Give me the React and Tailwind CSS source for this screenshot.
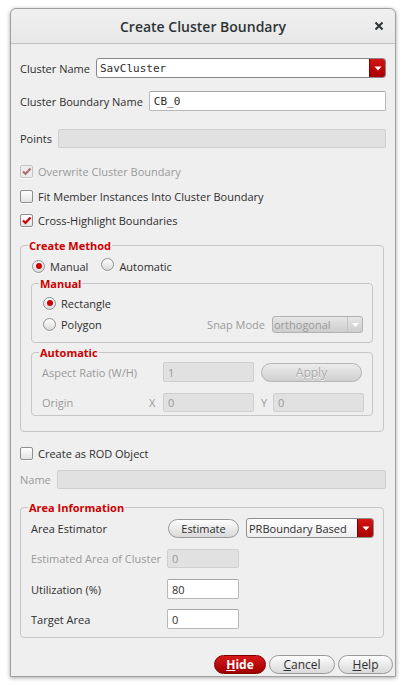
import React from "react";

const F = { fontFamily: '"Open Sans", "DejaVu Sans", sans-serif' };

function Check({ checked, disabled }) {
  return (
    <span
      className={`inline-flex items-center justify-center w-[13px] h-[13px] rounded-[2px] border ${
        disabled ? "border-[#c4c4c4] bg-[#ececec]" : "border-[#8f8f8f] bg-gradient-to-b from-[#ffffff] to-[#e4e4e4]"
      } shadow-[0_1px_0_rgba(255,255,255,0.8)]`}
    >
      {checked && (
        <svg width="11" height="11" viewBox="0 0 11 11">
          <path
            d="M2 5.5 L4.5 8 L9.5 2.5"
            fill="none"
            stroke={disabled ? "#b07070" : "#cc0000"}
            strokeWidth="2.2"
          />
        </svg>
      )}
    </span>
  );
}

function Radio({ checked }) {
  return (
    <span className="inline-flex items-center justify-center w-[13px] h-[13px] rounded-full border border-[#8f8f8f] bg-gradient-to-b from-[#ffffff] to-[#dadada] shadow-[0_1px_0_rgba(255,255,255,0.8)]">
      {checked && <span className="w-[6px] h-[6px] rounded-full bg-[#cc0000]" />}
    </span>
  );
}

function RedArrow({ w = 16 }) {
  return (
    <span
      className="flex items-center justify-center h-full bg-gradient-to-b from-[#d41414] to-[#a80000] border-l border-[#7a0000]"
      style={{ width: w }}
    >
      <svg width="8" height="5" viewBox="0 0 8 5">
        <path d="M0.5 0.5 L7.5 0.5 L4 4.5 Z" fill="#ffffff" />
      </svg>
    </span>
  );
}

function Input({ value, disabled, className = "", mono }) {
  return (
    <div
      className={`flex items-center px-[4px] rounded-[2px] border ${
        disabled
          ? "bg-[#e1e1e1] border-[#cfcfcf] text-[#9a9a9a]"
          : "bg-white border-[#b8b8b8] border-t-[#a6a6a6] text-[#2e2e2e]"
      } ${className}`}
      style={mono ? { fontFamily: '"DejaVu Sans Mono", monospace', fontSize: 11 } : undefined}
    >
      {value}
    </div>
  );
}

function Pill({ children, className = "", disabled }) {
  return (
    <div
      className={`flex items-center justify-center rounded-full border ${
        disabled
          ? "border-[#b4b4b4] bg-gradient-to-b from-[#ececec] to-[#cfcfcf] text-[#a8a8a8] [text-shadow:0_1px_0_#ffffff]"
          : "border-[#9a9a9a] bg-gradient-to-b from-[#fdfdfd] to-[#d9d9d9] text-[#2e2e2e]"
      } ${className}`}
    >
      {children}
    </div>
  );
}

export default function App() {
  return (
    <div className="w-[405px] h-[685px] bg-white pt-[8px] pl-[10px]" style={F}>
      <div className="w-[386px] h-[669px] flex flex-col bg-[#efefef] border border-[#9f9f9f] rounded-t-[6px] shadow-[0_1px_4px_rgba(0,0,0,0.35)] text-[11px] text-[#2e2e2e] leading-[15px]">
        {/* Title bar */}
        <div className="h-[35px] shrink-0 flex items-center justify-center relative border-b border-[#c0c0c0] bg-gradient-to-b from-[#f0f0f0] to-[#e8e8e8] rounded-t-[6px]">
          <span className="text-[14px] font-semibold text-[#2e3436]">Create Cluster Boundary</span>
          <svg className="absolute right-[11px] top-[12px]" width="10" height="10" viewBox="0 0 10 10">
            <path d="M1.5 1.5 L8.5 8.5 M8.5 1.5 L1.5 8.5" stroke="#2e3436" strokeWidth="2" />
          </svg>
        </div>

        <div className="px-[9px] flex flex-col">
          {/* Cluster Name */}
          <div className="mt-[14px] flex items-center gap-[6px]">
            <span>Cluster Name</span>
            <div className="flex-1 h-[20px] flex items-stretch rounded-[3px] border border-[#888888] bg-white overflow-hidden">
              <span
                className="flex-1 flex items-center pl-[3px]"
                style={{ fontFamily: '"DejaVu Sans Mono", monospace', fontSize: 11 }}
              >
                SavCluster
              </span>
              <RedArrow w={16} />
            </div>
          </div>

          {/* Boundary name */}
          <div className="mt-[13px] flex items-center gap-[6px]">
            <span>Cluster Boundary Name</span>
            <Input value="CB_0" mono className="flex-1 h-[20px]" />
          </div>

          {/* Points */}
          <div className="mt-[18px] flex items-center gap-[6px]">
            <span>Points</span>
            <Input value="" disabled className="flex-1 h-[19px]" />
          </div>

          {/* Checkboxes */}
          <div className="mt-[15px] h-[16px] flex items-center gap-[5px] text-[#9a9a9a]">
            <Check checked disabled />
            <span>Overwrite Cluster Boundary</span>
          </div>
          <div className="mt-[9px] h-[16px] flex items-center gap-[5px]">
            <Check />
            <span>Fit Member Instances Into Cluster Boundary</span>
          </div>
          <div className="mt-[8px] h-[16px] flex items-center gap-[5px]">
            <Check checked />
            <span>Cross-Highlight Boundaries</span>
          </div>

          {/* Create Method */}
          <fieldset className="mt-[10px] w-[364px] border border-[#c6c6c6] rounded-[4px] pb-[15px]">
            <legend className="ml-[7px] px-[1px] font-bold text-[#cc0000]">Create Method</legend>
            <div className="mt-[6px] h-[14px] flex items-center pl-[11px]">
              <Radio checked />
              <span className="ml-[5px]">Manual</span>
              <span className="ml-[13px]"><Radio /></span>
              <span className="ml-[5px]">Automatic</span>
            </div>

            <fieldset className="mt-[3px] ml-[10px] w-[342px] border border-[#c6c6c6] rounded-[4px] pb-[9px]">
              <legend className="ml-[7px] px-[1px] font-bold text-[#cc0000]">Manual</legend>
              <div className="mt-[5px] h-[14px] flex items-center pl-[11px]">
                <Radio checked />
                <span className="ml-[5px]">Rectangle</span>
              </div>
              <div className="mt-[6px] h-[17px] flex items-center pl-[11px]">
                <Radio />
                <span className="ml-[5px]">Polygon</span>
                <span className="ml-auto text-[#9a9a9a]">Snap Mode</span>
                <div className="ml-[7px] mr-[9px] w-[91px] h-[17px] flex items-stretch rounded-[3px] border border-[#b2b2b2] bg-gradient-to-b from-[#e6e6e6] to-[#cdcdcd] text-[#9a9a9a] overflow-hidden">
                  <span className="flex-1 flex items-center pl-[1px]">orthogonal</span>
                  <span className="w-[15px] flex items-center justify-center border-l border-[#c4c4c4]">
                    <svg width="7" height="4" viewBox="0 0 7 4">
                      <path d="M0 0 L7 0 L3.5 4 Z" fill="#ffffff" />
                    </svg>
                  </span>
                </div>
              </div>
            </fieldset>

            <fieldset className="mt-[2px] ml-[10px] w-[342px] border border-[#c6c6c6] rounded-[4px] pb-[3px]">
              <legend className="ml-[7px] px-[1px] font-bold text-[#cc0000]">Automatic</legend>
              <div className="mt-[2px] flex items-center pl-[10px] text-[#9a9a9a]">
                <span className="w-[121px]">Aspect Ratio (W/H)</span>
                <Input value="1" disabled className="w-[91px] h-[20px]" />
                <Pill disabled className="ml-[7px] w-[101px] h-[19px] text-[12px]">Apply</Pill>
              </div>
              <div className="mt-[11px] flex items-center pl-[10px] text-[#9a9a9a]">
                <span className="w-[107px]">Origin</span>
                <span className="w-[14px]">X</span>
                <Input value="0" disabled className="w-[91px] h-[19px]" />
                <span className="ml-[7px] w-[12px]">Y</span>
                <Input value="0" disabled className="w-[91px] h-[19px]" />
              </div>
            </fieldset>
          </fieldset>

          {/* ROD */}
          <div className="mt-[13px] h-[16px] flex items-center gap-[5px]">
            <Check />
            <span>Create as ROD Object</span>
          </div>
          <div className="mt-[9px] flex items-center gap-[6px]">
            <span className="text-[#9a9a9a]">Name</span>
            <Input value="" disabled className="flex-1 h-[19px]" />
          </div>

          {/* Area Information */}
          <fieldset className="mt-[11px] w-[364px] border border-[#c6c6c6] rounded-[4px] pb-[8px]">
            <legend className="ml-[7px] px-[1px] font-bold text-[#cc0000]">Area Information</legend>
            <div className="mt-[3px] flex items-center pl-[10px]">
              <span className="w-[137px]">Area Estimator</span>
              <Pill className="w-[71px] h-[19px]">Estimate</Pill>
              <div className="ml-[7px] w-[128px] h-[20px] flex items-stretch rounded-[3px] border border-[#8f8f8f] bg-gradient-to-b from-[#ffffff] to-[#ededed] overflow-hidden">
                <span className="flex-1 flex items-center pl-[2px]">PRBoundary Based</span>
                <RedArrow w={16} />
              </div>
            </div>
            <div className="mt-[11px] flex items-center pl-[10px]">
              <span className="w-[136px] text-[#9a9a9a]">Estimated Area of Cluster</span>
              <Input value="0" disabled className="w-[72px] h-[19px]" />
            </div>
            <div className="mt-[11px] flex items-center pl-[10px]">
              <span className="w-[136px]">Utilization (%)</span>
              <Input value="80" className="w-[72px] h-[20px]" />
            </div>
            <div className="mt-[10px] flex items-center pl-[10px]">
              <span className="w-[136px]">Target Area</span>
              <Input value="0" className="w-[72px] h-[20px]" />
            </div>
          </fieldset>
        </div>

        {/* Buttons */}
        <div className="mt-[17px] flex justify-end gap-[3px] pr-[2px] text-[12px]">
          <div className="w-[52px] h-[19px] flex items-center justify-center rounded-full border border-[#7a0000] bg-gradient-to-b from-[#d81818] to-[#a00000] text-white font-bold">
            <span><span className="underline">H</span>ide</span>
          </div>
          <Pill className="w-[66px] h-[19px]">
            <span><span className="underline">C</span>ancel</span>
          </Pill>
          <Pill className="w-[55px] h-[19px]">
            <span><span className="underline">H</span>elp</span>
          </Pill>
        </div>
      </div>
    </div>
  );
}
